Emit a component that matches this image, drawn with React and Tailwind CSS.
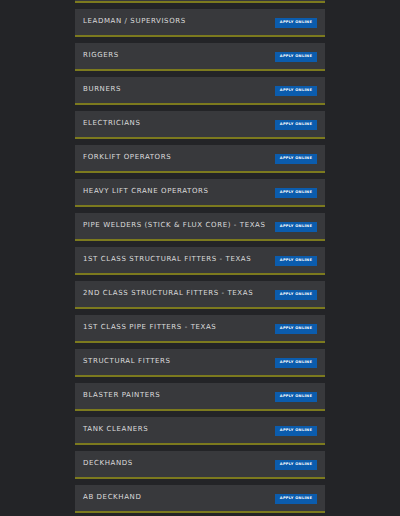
import React from "react";

const jobs = [
  "Leadman / Supervisors",
  "Riggers",
  "Burners",
  "Electricians",
  "Forklift Operators",
  "Heavy Lift Crane Operators",
  "Pipe Welders (Stick & Flux Core) - Texas",
  "1st Class Structural Fitters - Texas",
  "2nd Class Structural Fitters - Texas",
  "1st Class Pipe Fitters - Texas",
  "Structural Fitters",
  "Blaster Painters",
  "Tank Cleaners",
  "Deckhands",
  "AB Deckhand",
];

const JobCard = ({ title }) => (
  <div className="flex h-[28px] shrink-0 items-center justify-between border-b-2 border-[#7c7a1e] bg-[#38393c] pl-[8px] pr-[8px]">
    <span className="mb-[1px] text-[7px] uppercase tracking-[0.6px] text-[#dcdcdc] [font-family:'DejaVu_Sans',sans-serif]">
      {title}
    </span>
    <button className="mt-[1px] flex h-[10px] w-[42px] items-center justify-center bg-[#0b5cad] text-[3.6px] font-bold uppercase tracking-[0.3px] text-white [font-family:'DejaVu_Sans',sans-serif]">
      Apply Online
    </button>
  </div>
);

const App = () => {
  return (
    <div className="h-[516px] w-full overflow-hidden bg-[#232427]">
      <div className="mx-auto flex w-[250px] flex-col gap-[6px]">
        {/* bottom edge of the card scrolled off above */}
        <div className="h-[3px] shrink-0 border-b-2 border-[#7c7a1e] bg-[#38393c]" />
        {jobs.map((job, key) => (
          <JobCard key={key} title={job} />
        ))}
      </div>
    </div>
  );
};

export default App;
